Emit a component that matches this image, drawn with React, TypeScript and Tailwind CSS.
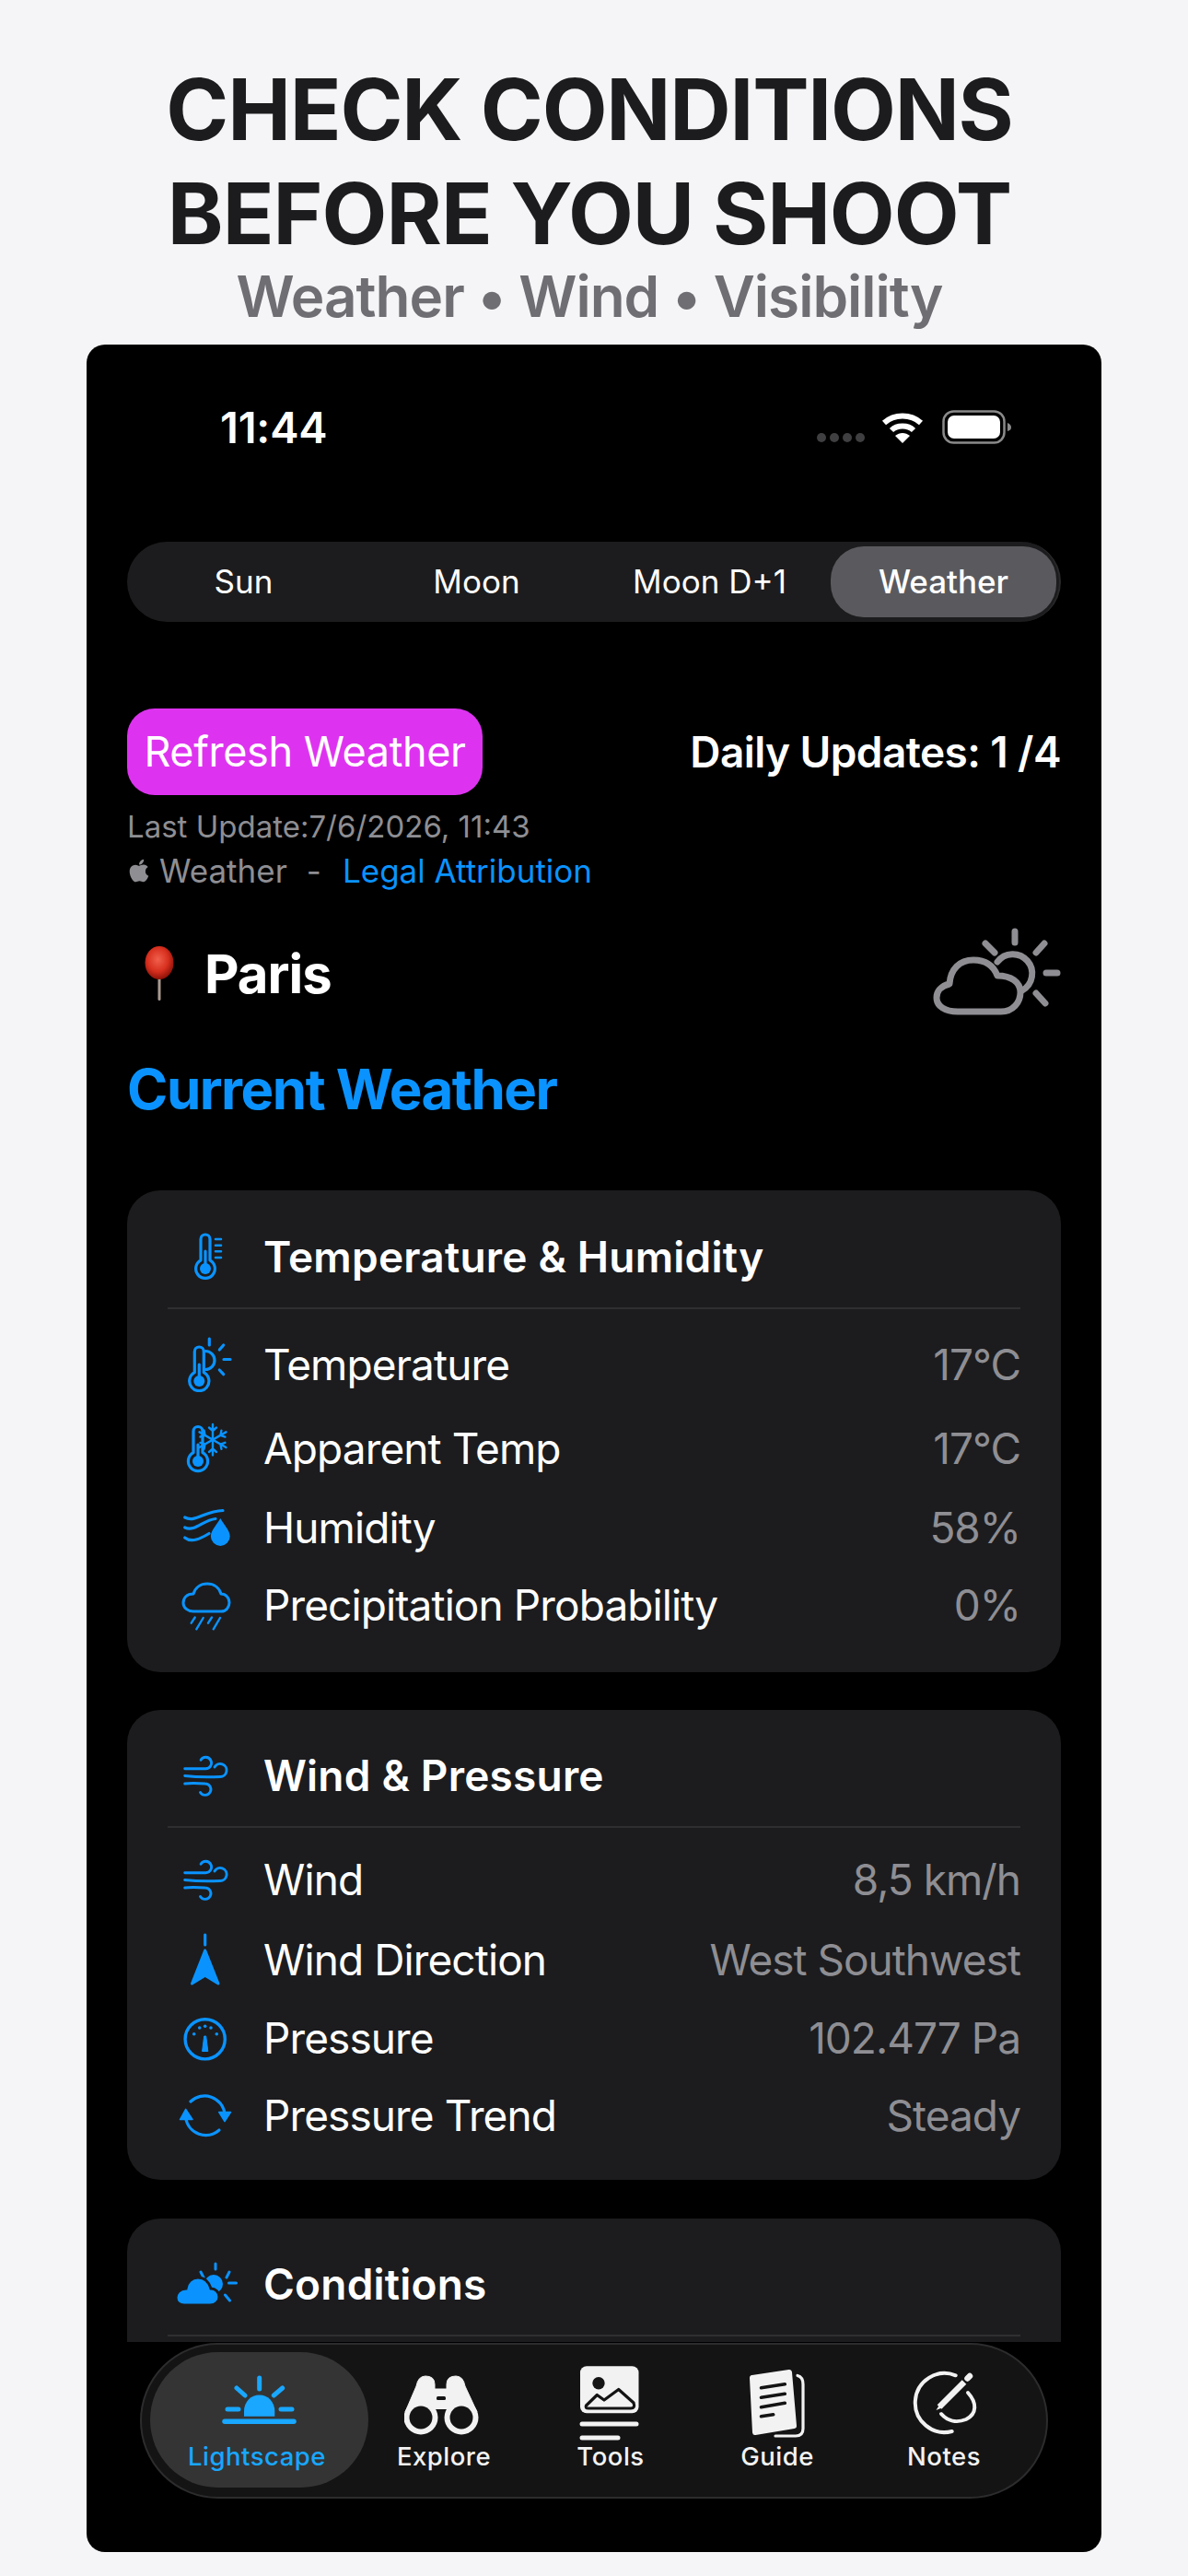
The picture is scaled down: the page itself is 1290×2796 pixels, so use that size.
import React from "react";
import { FaApple } from "react-icons/fa";

const BLUE = "#0a93ff";
const S = { fill: "none", stroke: BLUE, strokeLinecap: "round" as const, strokeLinejoin: "round" as const };

function IconBox({ children }: { children: React.ReactNode }) {
  return (
    <svg viewBox="0 0 82 60" className="w-[82px] h-[60px] shrink-0">
      {children}
    </svg>
  );
}

function thermoPath(x: number, top: number, by: number, r: number) {
  const h = Math.sqrt(r * r - 25);
  return `M${x - 5} ${by - h} V${top + 5} a5 5 0 0 1 10 0 V${by - h} A${r} ${r} 0 1 1 ${x - 5} ${by - h} Z`;
}

function ThermoHeader() {
  return (
    <IconBox>
      <g {...S} strokeWidth={3.2}>
        <path d={thermoPath(41, 6, 43, 10.4)} />
        <path d="M41 24V40" />
        <path d="M52 11H58M52 17.7H58M52 24.3H58M52 31H58" strokeWidth={2.6} />
      </g>
      <circle cx={41} cy={43} r={6} fill={BLUE} />
    </IconBox>
  );
}
function ThermoSun() {
  return (
    <IconBox>
      <g {...S} strokeWidth={3.2}>
        <path d={thermoPath(34.3, 11, 48, 10.6)} />
        <path d="M34.3 30V45" />
        <path d="M41 15.5a10 10 0 0 1 0 20" />
        <path d="M45.3 2V9M60.7 9 56.3 14M61 24.5H68M56.3 36 60.7 40.7" />
      </g>
      <circle cx={34.3} cy={48} r={6} fill={BLUE} />
    </IconBox>
  );
}
function ThermoSnow() {
  const arm = (deg: number) => (
    <g key={deg} transform={`rotate(${deg} 49 20.7)`}>
      <path d="M49 4V37.4M45 7.5 49 11 53 7.5M45 34 49 30.4 53 34" />
    </g>
  );
  return (
    <IconBox>
      <g {...S} strokeWidth={3.2}>
        <path d={thermoPath(33, 6.5, 44, 10.6)} />
        <path d="M33 26V41" />
      </g>
      <g {...S} strokeWidth={2.4}>{[0, 60, 120].map(arm)}</g>
      <circle cx={33} cy={44} r={6} fill={BLUE} />
    </IconBox>
  );
}
function Humidity() {
  return (
    <IconBox>
      <g {...S} strokeWidth={3.2}>
        <path d="M18.7 19C30 25 40 12 60 11.5" />
        <path d="M18.7 30C30 35 38 22 52 20.5" />
        <path d="M18.7 41C26 47 36 42 45 36.5" />
      </g>
      <path fill={BLUE} d="M57.3 20C61 27 67.7 33 67.7 39.5a10.4 10.4 0 0 1-20.8 0C46.9 33 53.6 27 57.3 20Z" />
    </IconBox>
  );
}
function Rain() {
  return (
    <IconBox>
      <g {...S} strokeWidth={3}>
        <path d="M28 37H58C64 37 67 32 67 27.5C67 22 63 18 58 18C56 11 50 7 43 7C36 7 30 11 28 18C21 18 17 22 17 28C17 33 22 37 28 37Z" />
        <path d="M29.7 43.5 25.7 49.7M38.7 44 31.3 56.3M48 43.5 44 49.7M57 44 49.7 56.3" strokeWidth={2.4} />
      </g>
    </IconBox>
  );
}
function WindIcon() {
  return (
    <IconBox>
      <g {...S} strokeWidth={2.9} transform="translate(0 10)">
        <path d="M18.7 12.7H41.3a6.2 6.2 0 1 0-5.2-9.5" />
        <path d="M18.7 20.5C32 22 46 22 57 21.5a7 7 0 1 0-6-10.5" />
        <path d="M18.7 29C26 28 34 28.5 40.7 29a6.2 6.2 0 1 1-5.2 9.5" />
      </g>
    </IconBox>
  );
}
function WindDir() {
  return (
    <IconBox>
      <path d="M40.7 3V14" {...S} strokeWidth={3.2} />
      <path d="M40.7 20 26.5 56 40.7 47.3 55 56Z" fill={BLUE} stroke={BLUE} strokeWidth={3} strokeLinejoin="round" />
    </IconBox>
  );
}
function Gauge() {
  return (
    <IconBox>
      <circle cx={40.7} cy={31.3} r={21.6} {...S} strokeWidth={3.4} />
      {[[28.7, 25.7], [34.7, 19], [40.7, 17.3], [47, 19], [53.3, 25.7]].map(([x, y]) => (
        <circle key={x} cx={x} cy={y} r={1.8} fill={BLUE} />
      ))}
      <path d="M39.7 28H41.7L43.8 44.5H37.6Z" fill={BLUE} stroke={BLUE} strokeWidth={1} strokeLinejoin="round" />
    </IconBox>
  );
}
function Trend() {
  return (
    <IconBox>
      <g {...S} strokeWidth={3.2}>
        <path d="M62 28A22 22 0 0 0 25 15" />
        <path d="M19.7 33A22 22 0 0 0 56 46" />
      </g>
      <path d="M19.7 23.3 13.5 34.5H27Z" fill={BLUE} stroke={BLUE} strokeWidth={1.5} strokeLinejoin="round" />
      <path d="M62 36.7 55.8 26.5H68.5Z" fill={BLUE} stroke={BLUE} strokeWidth={1.5} strokeLinejoin="round" />
    </IconBox>
  );
}
function CondIcon() {
  return (
    <IconBox>
      <g {...S} strokeWidth={3}>
        <path d="M52 8V14M36 17 39 23M67 17 64 23M66.5 29H74.5M62.5 42 67.5 48" />
      </g>
      <circle cx={50} cy={30} r={10} fill={BLUE} />
      <path
        d="M18 53H46C52 53 56 49 56 44C56 39 52 35 47 35C45 28 40 23 33 23C26 23 21 28 20 35C13 35 9 40 9 45C9 50 13 53 18 53Z"
        fill={BLUE}
        stroke="#1c1c1e"
        strokeWidth={3}
      />
    </IconBox>
  );
}

function CloudSun() {
  return (
    <svg viewBox="0 0 170 130" className="w-[170px] h-[130px] -mr-[18px] -mt-[4px]">
      <g fill="none" stroke="#8e8e93" strokeWidth={7} strokeLinecap="round" strokeLinejoin="round">
        <path d="M40 108H87C100 108 108 98 108 87C108 76 98 69 83 69C78 56 68 52 57 52C42 52 32 62 31 78C22 80 17 86 17 93C17 102 26 108 40 108Z" />
        <path d="M83 54A21 21 0 1 1 110 85" />
        <path d="M102 21V33M70 34 80 44M134 34 125 44M136 66H148M125 88 135 99" />
      </g>
    </svg>
  );
}

function Pin() {
  return (
    <svg viewBox="0 0 34 60" className="w-[34px] h-[60px]">
      <defs>
        <radialGradient id="pinball" cx="45%" cy="40%" r="60%">
          <stop offset="0%" stopColor="#f0604c" />
          <stop offset="60%" stopColor="#d8301f" />
          <stop offset="100%" stopColor="#8f1208" />
        </radialGradient>
      </defs>
      <rect x={15.5} y={28} width={3} height={31} rx={1.5} fill="#a89a90" />
      <ellipse cx={17} cy={18} rx={15.5} ry={18} fill="url(#pinball)" />
    </svg>
  );
}

function Wifi() {
  return (
    <svg viewBox="0 0 46 34" className="w-[46px] h-[34px]">
      <g fill="none" stroke="#fff" strokeWidth={6}>
        <path d="M3 12C14 2 32 2 43 12" />
        <path d="M11 20C17 14 29 14 35 20" />
      </g>
      <path d="M15 26C20 22 26 22 31 26L23 34Z" fill="#fff" />
    </svg>
  );
}
function Battery() {
  return (
    <svg viewBox="0 0 76 38" className="w-[76px] h-[38px]">
      <rect x={1.5} y={1.5} width={66} height={34} rx={11} fill="none" stroke="#8a8a8a" strokeWidth={2.5} />
      <rect x={6} y={6} width={57} height={25} rx={7} fill="#fff" />
      <path d="M71 14C74 15 75 17 75 19C75 21 74 22 71 23Z" fill="#8a8a8a" />
    </svg>
  );
}

function SunTab() {
  return (
    <svg viewBox="0 0 84 84" className="w-[84px] h-[84px]">
      <g fill="none" stroke="#19a7ff" strokeLinecap="round" strokeWidth={5}>
        <path d="M41.7 15V27M17 26 26 34M66.7 26 57.3 34M7 49H19M65 49H77" />
        <path d="M4 62.3H79" strokeWidth={5.5} />
      </g>
      <path d="M25 56.7V51a16.6 17.5 0 0 1 33.3 0V56.7Z" fill="#19a7ff" />
    </svg>
  );
}
function Binoculars() {
  return (
    <svg viewBox="0 0 84 84" className="w-[84px] h-[84px] -ml-[3px]">
      <path
        d="M13 24Q15 13 23 13Q33 13 33 22V27H46V22Q46 13 56 13Q64 13 66 24L79 52H1Z"
        fill="#f2f2f2"
        stroke="#f2f2f2"
        strokeWidth={1}
        strokeLinejoin="round"
      />
      <rect x={34} y={47} width={12} height={20} fill="#141414" />
      <rect x={32} y={42} width={16} height={7} fill="#f2f2f2" />
      <circle cx={18} cy={58} r={18.5} fill="#f2f2f2" />
      <circle cx={62} cy={58} r={18.5} fill="#f2f2f2" />
      <circle cx={18} cy={58} r={12.5} fill="#141414" />
      <circle cx={62} cy={58} r={12.5} fill="#141414" />
      <rect x={35} y={35} width={10} height={4} rx={1.5} fill="#141414" />
    </svg>
  );
}
function Tools() {
  return (
    <svg viewBox="0 0 84 84" className="w-[84px] h-[84px]">
      <rect x={9} y={2.3} width={63.5} height={51} rx={7} fill="#f2f2f2" />
      <circle cx={29} cy={20.7} r={6.7} fill="#141414" />
      <path d="M15.5 45 27.3 33.5 35 39 50.7 27.5 67 42Q69 48 64 48H18Q14 48 15.5 45Z" fill="#f2f2f2" stroke="#141414" strokeWidth={3.2} strokeLinejoin="round" />
      <rect x={8.5} y={62.5} width={64} height={5} rx={2.5} fill="#f2f2f2" />
      <rect x={8.5} y={77.5} width={44} height={5} rx={2.5} fill="#f2f2f2" />
    </svg>
  );
}
function Guide() {
  return (
    <svg viewBox="0 0 84 84" className="w-[84px] h-[84px]">
      <path d="M64 12.5Q70 14 70 22V70Q70 78 62 78H40" fill="none" stroke="#f2f2f2" strokeWidth={3.2} strokeLinecap="round" />
      <path d="M15 15 55 9 60 67 18 74Z" fill="#f2f2f2" stroke="#f2f2f2" strokeWidth={6} strokeLinejoin="round" />
      <g stroke="#141414" strokeWidth={3.6} strokeLinecap="round">
        <path d="M24.5 25.7 50.3 21.7M24.5 36.3 50.3 32.3M24.5 46.7 50.3 42.3M24.5 56.7 37.7 54.7" />
      </g>
    </svg>
  );
}
function Notes() {
  return (
    <svg viewBox="0 0 84 84" className="w-[84px] h-[84px]">
      <g fill="none" stroke="#f2f2f2" strokeWidth={4} strokeLinecap="round">
        <path d="M50.7 73A32 32 0 1 1 54.7 12.3" />
        <path d="M68 31C78 42 78 54 66 60C56 64 46 62 39 54" />
      </g>
      <path d="M35 48.5 66.3 17" stroke="#141414" strokeWidth={11} />
      <path d="M37 46.5 64 19.5" stroke="#f2f2f2" strokeWidth={6.5} />
      <path d="M33.5 50 38.5 42 41 47Z" fill="#f2f2f2" />
      <path d="M67.5 15.5 70 13" stroke="#f2f2f2" strokeWidth={6.5} strokeLinecap="round" />
    </svg>
  );
}

type Row = { icon: React.ReactNode; label: string; value: string; h: string };

function Card({ icon, title, rows, headerPt, rowsPt, className }: { icon: React.ReactNode; title: string; rows?: Row[]; headerPt: string; rowsPt?: string; className: string }) {
  return (
    <div className={`bg-[#1c1c1e] rounded-[36px] px-[44px] ${className}`}>
      <div className={`flex items-center ${headerPt}`}>
        <div className="flex items-center h-[110px]">
          {icon}
          <span className="ml-[22px] text-[46px] leading-[56px] font-semibold text-white tracking-[0.2px]">{title}</span>
        </div>
      </div>
      <div className="h-[2px] bg-[#2f2f31]" />
      {rows && (
        <div className={rowsPt}>
          {rows.map((r) => (
            <div key={r.label} className={`flex items-center ${r.h}`}>
              {r.icon}
              <span className="ml-[22px] text-[46px] leading-[56px] text-white tracking-[-0.9px]">{r.label}</span>
              <span className="ml-auto text-[46px] leading-[56px] text-[#8e8e93] tracking-[-1px]">{r.value}</span>
            </div>
          ))}
        </div>
      )}
    </div>
  );
}

function TabLabel({ children, active, className }: { children: React.ReactNode; active?: boolean; className?: string }) {
  return (
    <span className={`h-[30px] mt-[1px] text-[27.5px] leading-[30px] font-medium tracking-[0.5px] ${active ? "text-[#19a7ff]" : "text-[#f2f2f2]"} ${className ?? ""}`}>
      {children}
    </span>
  );
}

function TabItem({ icon, label }: { icon: React.ReactNode; label: string }) {
  return (
    <div className="w-[164px] flex flex-col items-center pt-[13px]">
      {icon}
      <TabLabel>{label}</TabLabel>
    </div>
  );
}

export default function App() {
  const card1: Row[] = [
    { icon: <ThermoSun />, label: "Temperature", value: "17°C", h: "h-[90px]" },
    { icon: <ThermoSnow />, label: "Apparent Temp", value: "17°C", h: "h-[92px]" },
    { icon: <Humidity />, label: "Humidity", value: "58%", h: "h-[80px]" },
    { icon: <Rain />, label: "Precipitation Probability", value: "0%", h: "h-[88px]" },
  ];
  const card2: Row[] = [
    { icon: <WindIcon />, label: "Wind", value: "8,5 km/h", h: "h-[88px]" },
    { icon: <WindDir />, label: "Wind Direction", value: "West Southwest", h: "h-[86px]" },
    { icon: <Gauge />, label: "Pressure", value: "102.477 Pa", h: "h-[84px]" },
    { icon: <Trend />, label: "Pressure Trend", value: "Steady", h: "h-[84px]" },
  ];
  return (
    <div className="w-[1290px] h-[2796px] bg-[#f5f5f7] font-['Inter',sans-serif] overflow-hidden">
      <div className="pt-[62px] pr-[10px] flex flex-col items-center">
        <div className="text-[92px] leading-[113px] font-bold text-[#1c1c1e] tracking-[-1.2px] text-center">CHECK CONDITIONS</div>
        <div className="text-[92px] leading-[113px] font-bold text-[#1c1c1e] tracking-[-1px] text-center">BEFORE YOU SHOOT</div>
        <div className="text-[62px] leading-[72px] font-semibold text-[#6e6e73] tracking-[-1px] text-center -mt-[2px]">Weather • Wind • Visibility</div>
      </div>

      <div className="absolute left-[94px] top-[374px] w-[1102px] h-[2396px] bg-black rounded-[20px] overflow-hidden flex flex-col">
        <div className="h-[2168px] overflow-hidden shrink-0 px-[44px]">
          <div className="h-[180px] flex items-center -mx-[44px] pl-[145px] pr-[97px]">
            <span className="text-white text-[47px] leading-[54px] font-semibold tracking-[-0.2px]">11:44</span>
            <div className="ml-auto flex items-center">
              <div className="flex gap-[4px] mt-[22px] mr-[18px]">
                <div className="w-[10px] h-[10px] rounded-full bg-[#3f3f41]" />
                <div className="w-[10px] h-[10px] rounded-full bg-[#3f3f41]" />
                <div className="w-[10px] h-[10px] rounded-full bg-[#3f3f41]" />
                <div className="w-[10px] h-[10px] rounded-full bg-[#3f3f41]" />
              </div>
              <Wifi />
              <div className="ml-[20px]"><Battery /></div>
            </div>
          </div>

          <div className="mt-[34px] h-[87px] bg-[#1c1c1e] rounded-full grid grid-cols-4 border-r-2 border-[#2a2a2c]">
            <div className="flex items-center justify-center text-[35px] text-white">Sun</div>
            <div className="flex items-center justify-center text-[35px] text-white">Moon</div>
            <div className="flex items-center justify-center text-[35px] text-white whitespace-nowrap">Moon D+1</div>
            <div className="my-[5px] ml-[5px] mr-[3px] rounded-[36px] bg-[#5a5a5e] flex items-center justify-center text-[35px] font-medium text-white">Weather</div>
          </div>

          <div className="mt-[94px] flex items-center justify-between">
            <div className="w-[386px] h-[94px] rounded-[30px] bg-[#dd33f0] flex items-center justify-center text-[45px] text-white tracking-[-0.4px]">Refresh Weather</div>
            <div className="text-[46px] leading-[54px] font-semibold text-white tracking-[-0.6px]">Daily Updates: 1 /4</div>
          </div>
          <div className="mt-[11px] h-[48px] flex items-center text-[33px] text-[#8e8e93]">Last Update:7/6/2026, 11:43</div>
          <div className="h-[46px] flex items-center text-[35px] text-[#8e8e93]">
            <FaApple className="w-[26px] h-[28px]" />
            <span className="ml-[9px]">Weather</span>
            <span className="ml-[21px]">-</span>
            <span className="ml-[23px] text-[#0a93ff]">Legal Attribution</span>
          </div>

          <div className="mt-[23px] h-[132px] flex items-center">
            <div className="ml-[18px]"><Pin /></div>
            <span className="ml-[32px] text-[58px] leading-[70px] font-bold text-white tracking-[-1px]">Paris</span>
            <div className="ml-auto"><CloudSun /></div>
          </div>
          <div className="mt-[19px] text-[60px] leading-[80px] font-bold text-[#0a93ff] tracking-[-1.5px]">Current Weather</div>

          <Card className="mt-[70px] pb-[29px]" headerPt="pt-[17px]" rowsPt="pt-[15px]" icon={<ThermoHeader />} title="Temperature & Humidity" rows={card1} />
          <Card className="mt-[41px] pb-[28px]" headerPt="pt-[16px]" rowsPt="pt-[12px]" icon={<WindIcon />} title="Wind & Pressure" rows={card2} />
          <Card className="mt-[42px] pb-[100px]" headerPt="pt-[16px]" icon={<CondIcon />} title="Conditions" />
        </div>

        <div className="mt-[1px] ml-[58px] w-[986px] h-[169px] rounded-full bg-[#141414] border-2 border-[#2c2c2e] flex items-start pl-[9px] py-[8px]">
          <div className="w-[237px] h-[147px] rounded-full bg-[#343434] flex flex-col items-center pt-[13px]">
            <SunTab />
            <TabLabel active className="mr-[5px]">Lightscape</TabLabel>
          </div>
          <div className="flex gap-[17px]">
            <TabItem icon={<Binoculars />} label="Explore" />
            <TabItem icon={<Tools />} label="Tools" />
            <TabItem icon={<Guide />} label="Guide" />
            <TabItem icon={<Notes />} label="Notes" />
          </div>
        </div>
      </div>
    </div>
  );
}
